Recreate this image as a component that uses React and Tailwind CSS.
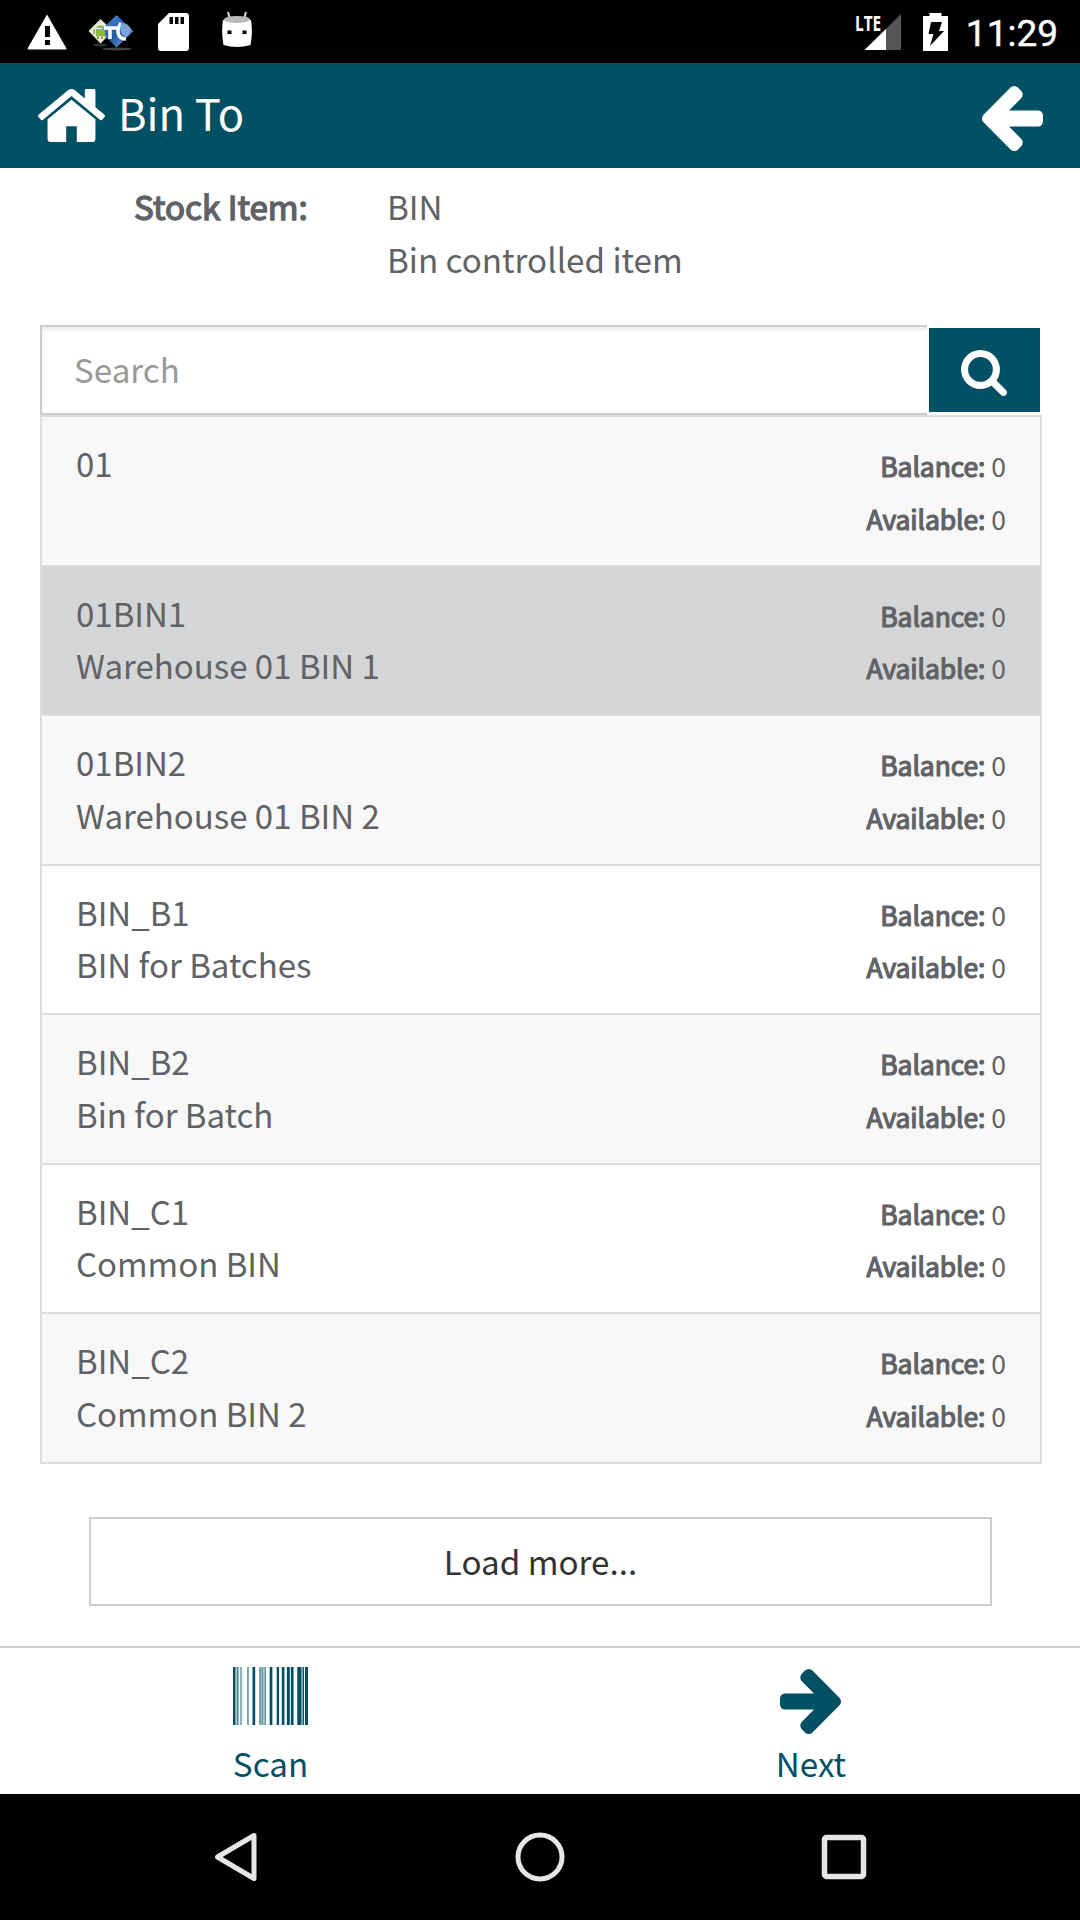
const bins = [
  { code: "01", description: "" },
  { code: "01BIN1", description: "Warehouse 01 BIN 1" },
  { code: "01BIN2", description: "Warehouse 01 BIN 2" },
  { code: "BIN_B1", description: "BIN for Batches" },
  { code: "BIN_B2", description: "Bin for Batch" },
  { code: "BIN_C1", description: "Common BIN" },
  { code: "BIN_C2", description: "Common BIN 2" },
];

const selectedCode = "01BIN1";

const arrowPath =
  "M1536 640v128q0 53-32.5 90.5t-84.5 37.5h-704l293 294q38 36 38 90t-38 90l-75 76q-37 37-90 37-52 0-91-37l-651-652q-37-37-37-90 0-52 37-91l651-650q38-38 91-38 52 0 90 38l75 74q38 38 38 91t-38 91l-293 293h704q52 0 84.5 37.5t32.5 90.5z";

const ArrowIcon = ({ className }) => (
  <svg viewBox="64 -75 1472 1558" preserveAspectRatio="none" fill="currentColor" className={className}>
    <path d={arrowPath} />
  </svg>
);

const HomeIcon = ({ className }) => (
  <svg viewBox="90 253 1612 1283" preserveAspectRatio="none" fill="currentColor" className={className}>
    <path d="M1472 992v480q0 26-19 45t-45 19h-384v-384h-256v384h-384q-26 0-45-19t-19-45v-480q0-1 .5-3t.5-3l575-474 575 474q1 2 1 6zm223-69l-62 74q-8 9-21 11h-3q-13 0-21-7l-692-577-692 577q-12 8-24 7-13-2-21-11l-62-74q-8-10-7-23.5t11-21.5l719-599q32-26 76-26t76 26l244 204v-195q0-14 9-23t23-9h192q14 0 23 9t9 23v408l219 182q10 8 11 21.5t-7 23.5z" />
  </svg>
);

const SearchIcon = ({ className }) => (
  <svg viewBox="64 128 1664 1664" fill="currentColor" className={className}>
    <path d="M1216 832q0-185-131.5-316.5t-316.5-131.5-316.5 131.5-131.5 316.5 131.5 316.5 316.5 131.5 316.5-131.5 131.5-316.5zm512 832q0 52-38 90t-90 38q-54 0-90-38l-343-342q-179 124-399 124-143 0-273.5-55.5t-225-150-150-225-55.5-273.5 55.5-273.5 150-225 225-150 273.5-55.5 273.5 55.5 225 150 150 225 55.5 273.5q0 220-124 399l343 343q37 37 37 90z" />
  </svg>
);

// [x, width, opacity]
const bars = [
  [0, 7, 1], [7, 6, 0.35], [13, 3, 1], [22, 3, 0.75], [25, 3, 0.25], [43, 3, 1],
  [58, 8, 1], [79, 3, 1], [84, 7, 0.55], [94, 3, 1], [109, 8, 1], [130, 7, 1],
  [145, 8, 1], [160, 9, 1], [172, 8, 1], [191, 12, 1], [203, 5, 0.5], [208, 3, 1],
  [214, 9, 1],
];

const BarcodeIcon = ({ className }) => (
  <svg viewBox="0 0 223 174" preserveAspectRatio="none" fill="currentColor" className={className}>
    {bars.map(([x, width, opacity]) => (
      <rect key={x} x={x} y="0" width={width} height="174" opacity={opacity} />
    ))}
  </svg>
);

const StatusBar = () => (
  <div className="flex h-[63px] items-center justify-between bg-black pl-[27px] pr-[22px] text-white">
    <div className="flex items-center">
      <svg viewBox="0 0 40 36" className="h-9 w-10" fill="none">
        <path d="M20 0.5 39.5 34.5Q39.5 35.5 38.5 35.5H1.5Q0.5 35.5 0.5 34.5Z" fill="#fff" />
        <path d="M18 12h5v11h-5zM18 26h5v5h-5z" fill="#000" />
      </svg>
      <svg viewBox="0 0 46 38" className="ml-[21px] mt-0.5 h-[38px] w-[46px]" fill="none">
        <defs>
          <linearGradient id="diamond" x1="0" y1="0" x2="1" y2="1">
            <stop offset="0" stopColor="#5c93d2" />
            <stop offset="0.4" stopColor="#2f68b5" />
            <stop offset="0.55" stopColor="#2458a6" />
            <stop offset="1" stopColor="#8fb4e0" />
          </linearGradient>
        </defs>
        <ellipse cx="12" cy="31" rx="7" ry="1.5" fill="#333" />
        <ellipse cx="29" cy="35" rx="15" ry="1.5" fill="#444" />
        <path d="M12.5 5 25 17 12.5 29.5 0.5 17Z" fill="#e4ead9" />
        <path d="M28.5 1 45.5 17 28.5 33.5 12 17Z" fill="url(#diamond)" />
        <path d="M8 14a5 5 0 0 1 9 0zM8 15h9v7H8zM5.5 15h1.5v5H5.5zM9 22h2v3H9zM13 22h2v3h-2z" fill="#8db83f" />
        <path d="M16 14h13M22 14v11" stroke="#fff" strokeWidth="3.5" />
        <path d="M33 9C28 16 29 25 38 25" stroke="#fff" strokeWidth="3.5" />
        <path d="M33 9q6-1 10 6-1 6-5 8-8-4-5-14z" fill="#7ba4da" />
      </svg>
      <svg viewBox="0 0 31 38" className="ml-6 h-[38px] w-[31px]">
        <path d="M11 0h17a3 3 0 0 1 3 3v32a3 3 0 0 1-3 3H3a3 3 0 0 1-3-3V11z" fill="#fff" />
        <path d="M11.5 4H15v7h-3.5zM17 4h3.5v7H17zM22.5 4H26v7h-3.5z" fill="#000" />
      </svg>
      <svg viewBox="0 0 32 37" className="mb-[5px] ml-8 h-[37px] w-8" fill="none">
        <path d="M7 1l2 7M25 1l-2 7" stroke="#ddd" strokeWidth="2" />
        <path d="M2 9Q16 4 30 9Q32 21 29.5 34Q16 38 2.5 34Q0 21 2 9Z" fill="#fff" />
        <ellipse cx="16" cy="8.5" rx="13" ry="3.5" fill="#bbb" />
        <path d="M6.5 19.5h4v3.5h-4zM21.5 19.5h4v3.5h-4z" fill="#000" />
      </svg>
    </div>
    <div className="flex items-center">
      <div className="relative h-9 w-[46px]">
        <svg viewBox="0 0 46 36" className="h-9 w-[46px]">
          <path d="M46 0v36H9.5z" fill="#555" />
          <path d="M31 15v21H9.5z" fill="#fff" />
        </svg>
        <span className="absolute left-0 top-0 origin-left scale-x-[0.7] font-['Open_Sans',sans-serif] text-[22px] font-bold leading-4">
          LTE
        </span>
      </div>
      <svg viewBox="0 0 25 38" className="ml-[22px] h-[38px] w-[25px]">
        <path d="M6.5 0h12v3H25v35H0V3h6.5z" fill="#fff" />
        <path d="M8 9h11l-3 9h5L7 33l3.5-12H5.5z" fill="#000" />
      </svg>
      <span className="ml-[18px] mt-1 font-['Roboto',sans-serif] text-[37px] leading-none [-webkit-text-stroke:0.4px]">
        11:29
      </span>
    </div>
  </div>
);

const Amount = ({ label, value }) => (
  <div>
    <span className="tracking-[-0.1px] [-webkit-text-stroke:1.2px]">{label}:</span> {value}
  </div>
);

const BinRow = ({ bin, index }) => {
  const selected = bin.code === selectedCode;
  const background = selected ? "bg-[#d4d5d7]" : index % 2 === 0 ? "bg-[#f8f8f8]" : "bg-white";

  return (
    <li className={`flex flex-1 justify-between border-b-2 border-[#dcddde] pl-[34px] pr-[34px] pt-5 ${background}`}>
      <div className="text-[33px] leading-[52.5px]">
        <div>{bin.code}</div>
        <div>{bin.description}</div>
      </div>
      <div className="pt-[3px] text-right text-[26.5px] leading-[52.5px]">
        <Amount label="Balance" value={0} />
        <Amount label="Available" value={0} />
      </div>
    </li>
  );
};

export default function App() {
  return (
    <div className="flex h-[1920px] w-[1080px] flex-col overflow-hidden bg-white font-['Noto_Sans_CJK_SC',sans-serif] text-[33.2px] text-[#606265]">
      <StatusBar />

      <header className="flex h-[105px] items-center justify-between bg-[#025064] pl-[38px] pr-[37px] text-white">
        <div className="flex items-center">
          <HomeIcon className="h-[53px] w-[67px]" />
          <h1 className="mb-[5px] ml-[13px] text-[43.5px] leading-none">Bin To</h1>
        </div>
        <ArrowIcon className="mt-[5px] h-[65px] w-[61px]" />
      </header>

      <section className="flex h-[157px] pl-[134px] pt-3 leading-[52.5px]">
        <div className="w-[253px] [-webkit-text-stroke:1.4px]">Stock Item:</div>
        <div>
          <div>BIN</div>
          <div>Bin controlled item</div>
        </div>
      </section>

      <div className="mx-10 flex h-[90px]">
        <div className="flex w-[887px] items-center border-2 border-r-0 border-[#ccc] pb-[3px] pl-8 text-[#999] shadow-[inset_0_3px_3px_rgba(0,0,0,0.075)]">
          Search
        </div>
        <button className="ml-0.5 mt-[3px] flex h-[84px] w-[111px] items-center justify-center bg-[#025064] text-white">
          <SearchIcon className="mr-px mt-1.5 h-[46px] w-[46px]" />
        </button>
      </div>

      <ul className="mx-10 flex h-[1049px] w-[1002px] flex-col border-2 border-b-0 border-[#dcddde]">
        {bins.map((bin, index) => (
          <BinRow key={bin.code} bin={bin} index={index} />
        ))}
      </ul>

      <button className="ml-[89px] mt-[53px] h-[89px] w-[903px] border-2 border-[#ccc] pb-0.5 text-[#333]">
        Load more...
      </button>

      <footer className="mt-10 flex h-[148px] border-t-2 border-[#d0d1d2] text-[#025064]">
        <div className="flex w-1/2 flex-col items-center pl-px pt-[19px]">
          <BarcodeIcon className="h-[58px] w-[75px]" />
          <span className="mt-3 leading-[52px]">Scan</span>
        </div>
        <div className="flex w-1/2 flex-col items-center pt-[21px]">
          <ArrowIcon className="h-[65px] w-[61px] rotate-180" />
          <span className="ml-0.5 mt-[3px] leading-[52px]">Next</span>
        </div>
      </footer>

      <nav className="flex h-[126px] items-center bg-black pl-[214px]">
        <svg viewBox="0 0 43 50" className="h-[50px] w-[43px]" fill="none">
          <path d="M40 3.5v43L3.5 25z" stroke="#e6e6e6" strokeWidth="5" strokeLinejoin="round" />
        </svg>
        <svg viewBox="0 0 50 50" className="ml-[258px] h-[50px] w-[50px]" fill="none">
          <circle cx="25" cy="25" r="22" stroke="#e6e6e6" strokeWidth="5" />
        </svg>
        <svg viewBox="0 0 46 46" className="ml-[256px] h-[46px] w-[46px]" fill="none">
          <rect x="3.5" y="3.5" width="39" height="39" rx="2" stroke="#e6e6e6" strokeWidth="5.5" />
        </svg>
      </nav>
    </div>
  );
}
